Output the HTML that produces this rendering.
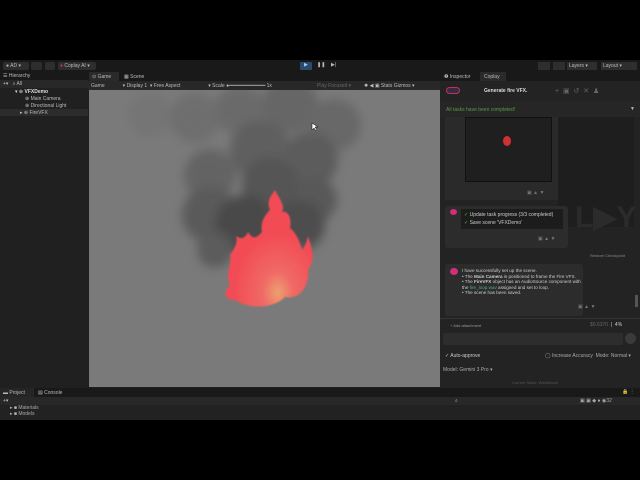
<!DOCTYPE html>
<html><head><style>
*{margin:0;padding:0;box-sizing:border-box}
body{width:640px;height:480px;background:#000;position:relative;overflow:hidden;font-family:"Liberation Sans",sans-serif;font-size:5px;color:#bbb}
.a{position:absolute}
.t{white-space:nowrap}
</style></head><body>
<!-- toolbar -->
<div class="a" style="left:0;top:60px;width:640px;height:12px;background:#191919"></div>
<div class="a t" style="left:3px;top:62px;width:26px;height:8px;background:#2e2e2e;border-radius:2px;padding:1px 3px">● AD ▾</div>
<div class="a" style="left:31px;top:62px;width:11px;height:8px;background:#2e2e2e;border-radius:2px"></div>
<div class="a" style="left:45px;top:62px;width:10px;height:8px;background:#2e2e2e;border-radius:2px"></div>
<div class="a t" style="left:58px;top:62px;width:38px;height:8px;background:#2e2e2e;border-radius:2px;padding:1px 2px"><span style="color:#d2335e">●</span> Coplay AI ▾</div>
<div class="a" style="left:300px;top:62px;width:12px;height:8px;background:#2a4a6e;border-radius:1px"></div>
<div class="a t" style="left:304px;top:62px;color:#9cf">▶</div>
<div class="a t" style="left:317px;top:62px">❚❚</div>
<div class="a t" style="left:331px;top:62px">▶|</div>
<div class="a" style="left:538px;top:62px;width:12px;height:8px;background:#2e2e2e"></div>
<div class="a" style="left:553px;top:62px;width:12px;height:8px;background:#2e2e2e"></div>
<div class="a t" style="left:567px;top:62px;width:30px;height:8px;background:#2e2e2e;padding:1px 2px">Layers ▾</div>
<div class="a t" style="left:601px;top:62px;width:36px;height:8px;background:#2e2e2e;padding:1px 2px">Layout ▾</div>

<!-- hierarchy -->
<div class="a" style="left:0;top:72px;width:88px;height:316px;background:#202020"></div>
<div class="a t" style="left:0;top:72px;width:88px;height:8px;background:#191919;padding:1px 3px">☰ Hierarchy</div>
<div class="a t" style="left:0;top:80px;width:88px;height:8px;background:#282828;padding:1px 3px">+▾ &nbsp;&nbsp;⌕ All</div>
<div class="a t" style="left:15px;top:89px;color:#ddd">▾ ⊕ <b>VFXDemo</b></div>
<div class="a t" style="left:25px;top:96px">⊕ Main Camera</div>
<div class="a t" style="left:25px;top:103px">⊕ Directional Light</div>
<div class="a" style="left:0;top:109px;width:88px;height:7px;background:#2c2c2c"></div>
<div class="a t" style="left:20px;top:110px">▸ ⊕ FireVFX</div>

<!-- game view -->
<div class="a" style="left:88px;top:72px;width:352px;height:316px;background:#1e1e1e"></div>
<div class="a" style="left:88px;top:72px;width:352px;height:9px;background:#191919"></div>
<div class="a t" style="left:89px;top:72px;width:30px;height:9px;background:#2a2a2a;padding:2px 3px">⊙ Game</div>
<div class="a t" style="left:124px;top:74px">▦ Scene</div>
<div class="a" style="left:88px;top:81px;width:352px;height:9px;background:#282828"></div>
<div class="a t" style="left:91px;top:83px">Game &nbsp;&nbsp;&nbsp;&nbsp;&nbsp;&nbsp;&nbsp;&nbsp;&nbsp;&nbsp;&nbsp;&nbsp;▾ Display 1 &nbsp;▾ Free Aspect &nbsp;&nbsp;&nbsp;&nbsp;&nbsp;&nbsp;&nbsp;&nbsp;&nbsp;&nbsp;&nbsp;&nbsp;&nbsp;&nbsp;&nbsp;&nbsp;&nbsp;&nbsp;&nbsp;▾ Scale ●━━━━━━━━━━━━ 1x</div>
<div class="a t" style="left:317px;top:83px;color:#666">Play Focused ▾</div>
<div class="a t" style="left:364px;top:83px">✹ ◀ ▣ Stats Gizmos ▾</div>
<svg class="a" style="left:89px;top:90px" width="351" height="297" viewBox="89 90 351 297">
<defs><filter id="b" x="-50%" y="-50%" width="200%" height="200%"><feGaussianBlur stdDeviation="5"/></filter>
<filter id="b2"><feGaussianBlur stdDeviation="0.7"/></filter>
<radialGradient id="fg" cx="0.6" cy="0.88" r="0.5"><stop offset="0" stop-color="#eea070"/><stop offset="0.35" stop-color="#f06a66"/><stop offset="1" stop-color="#f24c55"/></radialGradient></defs>
<rect x="89" y="90" width="351" height="297" fill="#7a7a7a"/>
<g filter="url(#b)">
<circle cx="150" cy="115" r="22" fill="#747474"/>
<circle cx="195" cy="118" r="25" fill="#6e6e6e"/>
<circle cx="240" cy="110" r="25" fill="#6a6a6a"/>
<circle cx="290" cy="105" r="28" fill="#666"/>
<circle cx="335" cy="125" r="26" fill="#686868"/>
<circle cx="310" cy="160" r="28" fill="#5c5c5c"/>
<circle cx="260" cy="150" r="30" fill="#5e5e5e"/>
<circle cx="210" cy="175" r="26" fill="#636363"/>
<circle cx="270" cy="185" r="28" fill="#545454"/>
<circle cx="315" cy="200" r="22" fill="#585858"/>
<circle cx="210" cy="215" r="28" fill="#5a5a5a"/>
<circle cx="245" cy="225" r="30" fill="#4a4a4a"/>
<circle cx="300" cy="225" r="25" fill="#4e4e4e"/>
<circle cx="215" cy="250" r="18" fill="#5c5c5c"/>
</g>
<path filter="url(#b2)" fill="url(#fg)" d="M275 190 C280 200 285 205 282 212 C288 210 292 218 290 228 C295 232 300 240 302 250 C305 246 307 242 308 236 C312 248 316 260 308 270 C310 285 300 300 285 297 C275 308 250 310 235 300 C222 300 225 290 230 285 C225 275 232 265 230 255 C235 248 238 242 236 236 C242 240 245 238 248 232 C252 238 255 240 262 232 C260 222 265 215 270 210 C266 200 272 195 275 190Z"/>
<path d="M312 123 l0 7 l2 -2 l2 3 l1 -1 l-2 -3 l3 0z" fill="#fff" stroke="#000" stroke-width="0.5"/>
</svg>

<!-- inspector/coplay -->
<div class="a" style="left:440px;top:72px;width:200px;height:316px;background:#232323"></div>
<div class="a t" style="left:440px;top:72px;width:200px;height:9px;background:#191919;padding:2px 4px">❶ Inspector</div>
<div class="a t" style="left:480px;top:72px;width:26px;height:9px;background:#2a2a2a;padding:2px 4px">Coplay</div>
<div class="a" style="left:446px;top:87px;width:14px;height:7px;border:1px solid #c03060;border-radius:4px;background:#3a2a40"></div>
<div class="a t" style="left:484px;top:88px;color:#ddd;font-weight:bold">Generate fire VFX.</div>
<div class="a t" style="left:555px;top:87px;color:#666;font-size:7px">+ &nbsp;▣ &nbsp;↺ &nbsp;✕ &nbsp;♟</div>
<div class="a" style="left:440px;top:102px;width:200px;height:15px;background:#262626"></div>
<div class="a t" style="left:446px;top:107px;color:#5a9a4a">All tasks have been completed!</div>
<div class="a t" style="left:630px;top:106px">▼</div>
<div class="a" style="left:558px;top:117px;width:76px;height:110px;background:#1e1e1e"></div>
<div class="a" style="left:445px;top:117px;width:113px;height:83px;background:#2a2a2a"></div>
<div class="a" style="left:465px;top:117px;width:87px;height:65px;background:#1f1f1f;border:1px solid #111"></div>
<div class="a" style="left:503px;top:136px;width:8px;height:10px;background:#d03030;border-radius:50%"></div>
<div class="a t" style="left:527px;top:190px;color:#777">▣ ▲ ▼</div>
<div class="a t" style="left:575px;top:200px;font-size:30px;font-weight:bold;color:#2b2b2b">L▶Y</div>
<div class="a" style="left:445px;top:206px;width:123px;height:42px;background:#2c2c2c;border-radius:3px"></div>
<div class="a" style="left:450px;top:209px;width:7px;height:6px;background:#d0307a;border-radius:50%"></div>
<div class="a" style="left:461px;top:209px;width:102px;height:20px;background:#1c1c1c"></div>
<div class="a t" style="left:464px;top:212px;color:#ccc"><span style="color:#6b4">✓</span> Update task progress (3/3 completed)</div>
<div class="a t" style="left:464px;top:220px;color:#ccc"><span style="color:#6b4">✓</span> Save scene 'VFXDemo'</div>
<div class="a t" style="left:538px;top:236px;color:#777">▣ ▲ ▼</div>
<div class="a t" style="left:590px;top:253px;color:#888;font-size:4px">Restore Checkpoint</div>
<div class="a" style="left:445px;top:264px;width:138px;height:52px;background:#2c2c2c;border-radius:3px"></div>
<div class="a" style="left:450px;top:268px;width:8px;height:7px;background:#d0307a;border-radius:50%"></div>
<div class="a t" style="left:462px;top:268px;color:#ccc;line-height:5.5px;font-size:4.6px">I have successfully set up the scene.<br>• The <b>Main Camera</b> is positioned to frame the Fire VFX.<br>• The <b>FireVFX</b> object has an AudioSource component with<br>the <span style="color:#5a9">fire_loop.wav</span> assigned and set to loop.<br>• The scene has been saved.</div>
<div class="a t" style="left:578px;top:304px;color:#777">▣ ▲ ▼</div>
<div class="a" style="left:635px;top:295px;width:3px;height:12px;background:#555"></div>
<div class="a" style="left:440px;top:318px;width:200px;height:1px;background:#333"></div>
<div class="a t" style="left:450px;top:323px;color:#999;font-size:4px">+ Add attachment</div>
<div class="a t" style="left:590px;top:322px;color:#666">$0.6370 &nbsp;<span style="color:#ccc">| &nbsp;4%</span></div>
<div class="a" style="left:443px;top:333px;width:180px;height:12px;background:#2d2d2d;border-radius:2px"></div>
<div class="a" style="left:625px;top:333px;width:11px;height:11px;background:#3a3a3a;border-radius:50%"></div>
<div class="a t" style="left:445px;top:353px;color:#ccc">✓ Auto-approve</div>
<div class="a t" style="left:545px;top:353px;color:#aaa">◯ Increase Accuracy &nbsp;Mode: Normal ▾</div>
<div class="a t" style="left:443px;top:367px;color:#aaa">Model: Gemini 3 Pro ▾</div>
<div class="a t" style="left:512px;top:380px;color:#555;font-size:4px">Current Slave: WebMoadi</div>

<!-- project -->
<div class="a" style="left:0;top:388px;width:640px;height:32px;background:#222"></div>
<div class="a" style="left:0;top:388px;width:640px;height:9px;background:#191919"></div>
<div class="a t" style="left:0;top:388px;width:34px;height:9px;background:#252525;padding:2px 3px">▬ Project</div>
<div class="a t" style="left:38px;top:390px">▤ Console</div>
<div class="a t" style="left:622px;top:389px">🔒 ⋮</div>
<div class="a" style="left:0;top:397px;width:640px;height:8px;background:#282828"></div>
<div class="a t" style="left:3px;top:398px">+▾</div>
<div class="a t" style="left:455px;top:398px">⌕</div>
<div class="a t" style="left:580px;top:398px;color:#aaa">▣ ▣ ◆ ● ◉32</div>
<div class="a t" style="left:10px;top:405px;color:#aaa">▸ <span style="color:#bbb">■</span> Materials</div>
<div class="a t" style="left:10px;top:411px;color:#aaa">▸ <span style="color:#bbb">■</span> Models</div>
</body></html>
